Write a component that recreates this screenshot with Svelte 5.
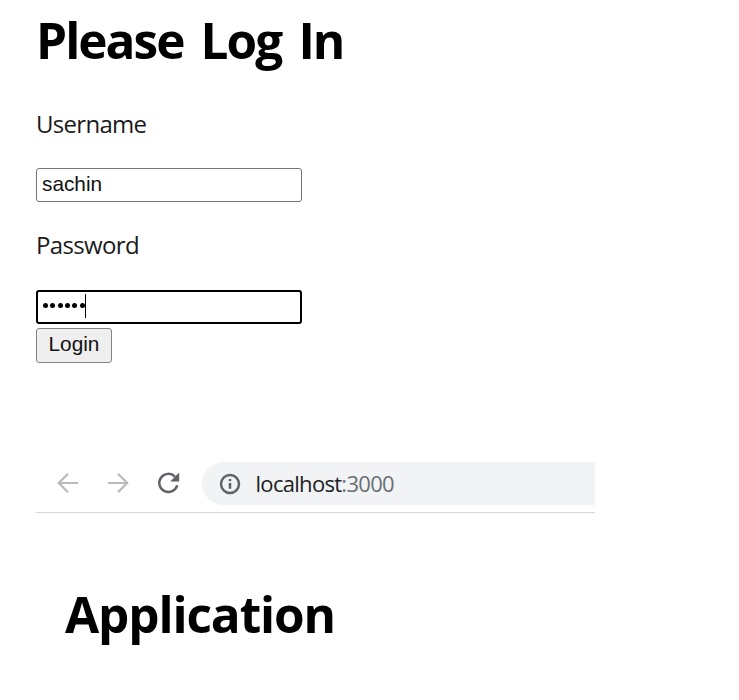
<script>
  let username = $state('sachin');
  const passwordLength = 6;
</script>

<main>
  <form onsubmit={(e) => e.preventDefault()}>
    <h1 class="login-title">Please Log In</h1>
    <label class="user-label" for="username">Username</label>
    <input id="username" type="text" bind:value={username} />
    <span class="pass-label">Password</span>
    <div class="password" role="textbox" aria-label="Password" tabindex="0">
      {#each Array(passwordLength) as _}
        <i class="dot"></i>
      {/each}
      <i class="caret"></i>
    </div>
    <button type="submit">Login</button>
  </form>

  <nav>
    <svg class="back" width="22" height="22" viewBox="0 0 22 22">
      <path d="M21 11H2M11 1.8 1.8 11l9.2 9.2" />
    </svg>
    <svg class="forward" width="22" height="22" viewBox="0 0 22 22">
      <path d="M1 11h19M11 1.8l9.2 9.2-9.2 9.2" />
    </svg>
    <svg class="reload" width="24" height="24" viewBox="0 0 24 24">
      <path d="M20.2 14.2A9.1 9.1 0 1 1 17.9 5.6" />
      <path class="tip" d="M22.2 1.6v9h-9z" />
    </svg>
    <div class="address">
      <svg class="info" width="22" height="22" viewBox="0 0 22 22">
        <circle cx="11" cy="11" r="9" />
        <path d="M11 10v5.8M11 6v2.3" />
      </svg>
      <span class="url">localhost<span class="port">:3000</span></span>
    </div>
  </nav>

  <h1 class="app-title">Application</h1>
</main>

<style>
  :global(body) {
    background: #fff;
  }
  main {
    box-sizing: border-box;
    height: 700px;
    padding: 10px 0 0 36px;
    overflow: hidden;
    color: #000;
    font-family: 'Open Sans', 'Noto Sans', sans-serif;
  }
  form {
    display: flex;
    flex-direction: column;
    align-items: flex-start;
  }
  h1 {
    margin: 0;
    font-size: 49.5px;
    line-height: 60px;
    font-weight: 700;
    white-space: nowrap;
  }
  .login-title {
    letter-spacing: -1.95px;
    word-spacing: 6.2px;
  }
  .user-label,
  .pass-label {
    font-size: 24px;
    line-height: 32px;
    color: #1a1a1a;
  }
  .user-label {
    margin-top: 38px;
    letter-spacing: -0.7px;
  }
  .pass-label {
    margin-top: 27px;
    letter-spacing: -0.65px;
  }
  input,
  .password {
    box-sizing: border-box;
    width: 266px;
    height: 34px;
    border-radius: 3px;
    background: #fff;
  }
  input {
    margin: 28px 0 0;
    padding: 0 5px 2px;
    border: 1px solid #767676;
    outline: none;
    color: #111;
    font: 20.8px/30px 'Liberation Sans', Arial, sans-serif;
  }
  .password {
    display: flex;
    gap: 2.4px;
    margin-top: 29px;
    padding: 0 4.8px;
    border: 2px solid #000;
    outline: none;
  }
  .dot {
    width: 5px;
    height: 5px;
    margin-top: 10.5px;
    border-radius: 50%;
    background: #000;
  }
  .caret {
    width: 1px;
    height: 24px;
    margin: 2px 0 0 -2px;
    background: #000;
  }
  button {
    box-sizing: border-box;
    width: 76px;
    height: 35px;
    margin: 4px 0 0;
    padding: 0 0 3px;
    border: 1px solid #858585;
    border-radius: 3px;
    background: #efefef;
    color: #111;
    font: 20.8px/30px 'Liberation Sans', Arial, sans-serif;
  }
  nav {
    box-sizing: border-box;
    display: flex;
    align-items: center;
    width: 559px;
    height: 52px;
    margin-top: 98px;
    padding: 0 0 7px 21px;
    border-bottom: 1px solid #d3d8da;
  }
  svg {
    flex: none;
    fill: none;
    stroke: #5f6368;
    stroke-width: 2.5;
  }
  .back,
  .forward {
    stroke: #b8babc;
    stroke-width: 2.2;
  }
  .forward {
    margin-left: 28px;
  }
  .reload {
    margin-left: 28px;
  }
  .reload .tip {
    fill: #5f6368;
    stroke: none;
  }
  .address {
    box-sizing: border-box;
    display: flex;
    align-items: center;
    flex: 1;
    height: 43px;
    margin-left: 21px;
    padding-left: 17px;
    border-radius: 22px 0 0 22px;
    background: #f1f3f4;
  }
  .info {
    margin-top: 1px;
  }
  .url {
    margin-left: 14.5px;
    color: #202124;
    font-size: 22px;
    line-height: 30px;
    letter-spacing: -0.7px;
  }
  .port {
    color: #6b6f73;
  }
  .app-title {
    margin: 71px 0 0 29px;
    letter-spacing: -1.1px;
  }
</style>
